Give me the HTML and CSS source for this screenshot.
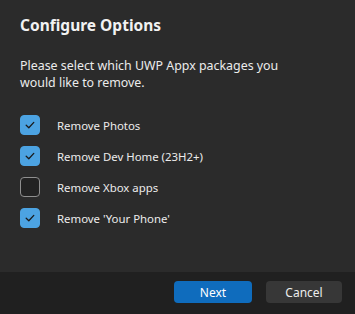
FILE: index.html
```html
<!DOCTYPE html>
<html lang="en">
<head>
  <meta charset="UTF-8">
  <meta name="viewport" content="width=device-width, initial-scale=1.0">
  <title>Configure Options</title>
  <link rel="stylesheet" href="styles.css">
</head>
<body>
  <div class="dialog">
    <div class="content">
      <h1 class="title">Configure Options</h1>
      <p class="desc">Please select which UWP Appx packages you would like to remove.</p>

      <div class="options">
        <label class="option">
          <span class="box checked">
            <svg viewBox="0 0 12 12" width="12" height="12"><path d="M2.2 6.3 L4.8 8.8 L9.8 3.4" /></svg>
          </span>
          <span class="label">Remove Photos</span>
        </label>
        <label class="option">
          <span class="box checked">
            <svg viewBox="0 0 12 12" width="12" height="12"><path d="M2.2 6.3 L4.8 8.8 L9.8 3.4" /></svg>
          </span>
          <span class="label">Remove Dev Home (23H2+)</span>
        </label>
        <label class="option">
          <span class="box"></span>
          <span class="label">Remove Xbox apps</span>
        </label>
        <label class="option">
          <span class="box checked">
            <svg viewBox="0 0 12 12" width="12" height="12"><path d="M2.2 6.3 L4.8 8.8 L9.8 3.4" /></svg>
          </span>
          <span class="label">Remove 'Your Phone'</span>
        </label>
      </div>
    </div>

    <div class="footer">
      <button class="btn primary">Next</button>
      <button class="btn cancel">Cancel</button>
    </div>
  </div>
</body>
</html>
```

FILE: styles.css
```css
html, body {
  margin: 0;
  padding: 0;
  background: #2b2b2b;
}

* {
  box-sizing: border-box;
}

body {
  font-family: "Noto Sans", "Open Sans", sans-serif;
  color: #ffffff;
}

.dialog {
  width: 355px;
  height: 314px;
  display: flex;
  flex-direction: column;
}

.content {
  flex: 1;
  padding: 13px 20px 0 20px;
}

.title {
  font-size: 15.5px;
  font-weight: bold;
  margin: 0;
  line-height: 24px;
  color: #f2f2f2;
}

.desc {
  font-size: 12.4px;
  line-height: 17px;
  margin: 20px 0 0 0;
  width: 278px;
  color: #ececec;
}

.options {
  margin-top: 24px;
  display: flex;
  flex-direction: column;
  gap: 11px;
}

.option {
  display: flex;
  align-items: center;
  height: 20px;
}

.box {
  width: 20px;
  height: 20px;
  border: 1px solid #8f8f8f;
  border-radius: 4px;
  background: #232323;
  display: flex;
  align-items: center;
  justify-content: center;
}

.box.checked {
  background: #4ca3e2;
  border-color: #4ca3e2;
}

.box svg path {
  fill: none;
  stroke: #1a1a1a;
  stroke-width: 1.3;
  stroke-linecap: round;
  stroke-linejoin: round;
}

.label {
  margin-left: 17px;
  font-size: 11.4px;
  color: #ececec;
}

.footer {
  height: 42px;
  background: #202020;
  display: flex;
  justify-content: flex-end;
  align-items: flex-start;
  padding: 9px 13px 0 0;
  gap: 14px;
}

.btn {
  width: 78px;
  height: 22px;
  border: none;
  border-radius: 4px;
  background: #373737;
  color: #ececec;
  font-family: "Noto Sans", "Open Sans", sans-serif;
  font-size: 12px;
  padding: 0;
}

.btn.cancel {
  width: 76px;
}

.btn.primary {
  background: #0f6cbd;
  color: #ffffff;
}
```
